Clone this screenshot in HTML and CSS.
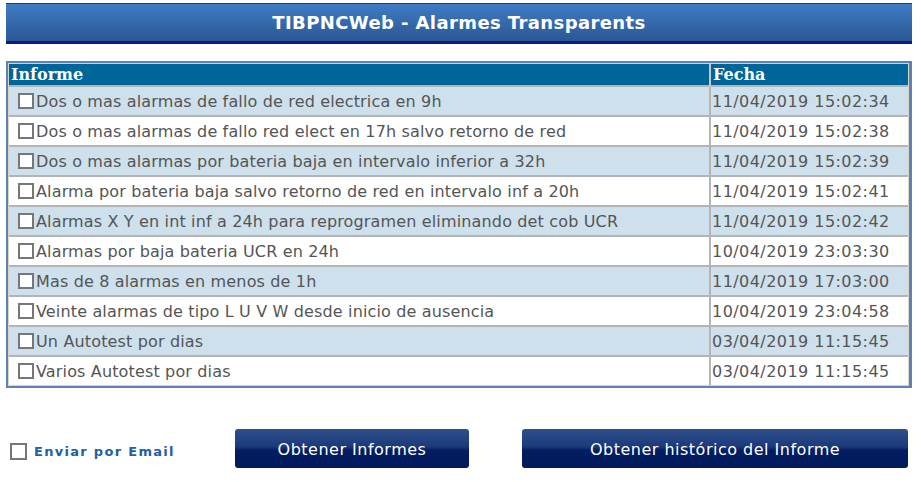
FILE: index.html
```html
<!DOCTYPE html>
<html lang="es">
<head>
    <meta charset="UTF-8">
    <meta name="viewport" content="width=device-width, initial-scale=1.0">
    <title>TIBPNCWeb - Alarmes Transparents</title>
    <link rel="stylesheet" href="styles.css">
</head>
<body>
    <div class="title-bar">TIBPNCWeb - Alarmes Transparents</div>

    <div class="report-wrap">
        <table class="report-table">
            <thead>
                <tr>
                    <th class="col-informe">Informe</th>
                    <th class="col-fecha">Fecha</th>
                </tr>
            </thead>
            <tbody>
                <tr class="row-alt">
                    <td><label><input type="checkbox">Dos o mas alarmas de fallo de red electrica en 9h</label></td>
                    <td>11/04/2019 15:02:34</td>
                </tr>
                <tr>
                    <td><label><input type="checkbox">Dos o mas alarmas de fallo red elect en 17h salvo retorno de red</label></td>
                    <td>11/04/2019 15:02:38</td>
                </tr>
                <tr class="row-alt">
                    <td><label><input type="checkbox">Dos o mas alarmas por bateria baja en intervalo inferior a 32h</label></td>
                    <td>11/04/2019 15:02:39</td>
                </tr>
                <tr>
                    <td><label><input type="checkbox">Alarma por bateria baja salvo retorno de red en intervalo inf a 20h</label></td>
                    <td>11/04/2019 15:02:41</td>
                </tr>
                <tr class="row-alt">
                    <td><label><input type="checkbox">Alarmas X Y en int inf a 24h para reprogramen eliminando det cob UCR</label></td>
                    <td>11/04/2019 15:02:42</td>
                </tr>
                <tr>
                    <td><label><input type="checkbox">Alarmas por baja bateria UCR en 24h</label></td>
                    <td>10/04/2019 23:03:30</td>
                </tr>
                <tr class="row-alt">
                    <td><label><input type="checkbox">Mas de 8 alarmas en menos de 1h</label></td>
                    <td>11/04/2019 17:03:00</td>
                </tr>
                <tr>
                    <td><label><input type="checkbox">Veinte alarmas de tipo L U V W desde inicio de ausencia</label></td>
                    <td>10/04/2019 23:04:58</td>
                </tr>
                <tr class="row-alt">
                    <td><label><input type="checkbox">Un Autotest por dias</label></td>
                    <td>03/04/2019 11:15:45</td>
                </tr>
                <tr>
                    <td><label><input type="checkbox">Varios Autotest por dias</label></td>
                    <td>03/04/2019 11:15:45</td>
                </tr>
            </tbody>
        </table>
    </div>

    <div class="actions">
        <label class="email-option"><input type="checkbox">Enviar por Email</label>
        <button class="btn btn-informes">Obtener Informes</button>
        <button class="btn btn-historico">Obtener histórico del Informe</button>
    </div>
</body>
</html>
```

FILE: styles.css
```css
body {
    font-family: "DejaVu Sans", Verdana, sans-serif;
    margin: 3px 9px 0 6px;
    background: #fff;
}

.title-bar {
    height: 37px;
    line-height: 37px;
    border-top: 1px solid #1a3f8a;
    border-bottom: 3px solid #0a1a88;
    background: linear-gradient(#3f7cc4, #2b5794);
    color: #fff;
    font-weight: bold;
    font-size: 18px;
    letter-spacing: 0.4px;
    text-align: center;
}

.report-wrap {
    margin-top: 17px;
    border: 2px solid #5f82b4;
    border-right-width: 3px;
    background: #d8d4cc;
    padding: 1px;
}

.report-table {
    width: 100%;
    border-collapse: collapse;
    background: #fff;
}

.report-table th {
    background: #006699;
    color: #fff;
    font-family: "DejaVu Serif", "Times New Roman", serif;
    font-weight: bold;
    font-size: 16px;
    text-align: left;
    height: 21px;
    padding: 0 2px;
    line-height: 21px;
    border-left: 2px solid #c8c8c8;
}

.report-table th:first-child {
    border-left: none;
}

.col-fecha {
    width: 193px;
}

.report-table td {
    height: 28px;
    padding: 0 2px 0 9px;
    color: #555;
    font-size: 16px;
    letter-spacing: 0.15px;
    border-top: 2px solid #b4b4b4;
    border-left: 2px solid #b4b4b4;
    white-space: nowrap;
}

.report-table td:first-child {
    border-left: none;
}

.report-table td:last-child {
    padding-left: 1px;
    letter-spacing: 0.45px;
}

.row-alt td {
    background: #cde0ec;
}

.report-table label {
    display: flex;
    align-items: center;
}

input[type="checkbox"] {
    appearance: none;
    width: 16px;
    height: 16px;
    margin: 0 2px 0 0;
    border: 2px solid #777;
    background: #fff;
    box-sizing: border-box;
}

.actions {
    display: flex;
    align-items: center;
    margin-top: 41px;
}

.email-option {
    display: flex;
    align-items: center;
    margin-left: 4px;
    margin-top: 6px;
    color: #22609f;
    font-weight: bold;
    font-size: 13px;
    letter-spacing: 1.3px;
    width: 225px;
}

.email-option input[type="checkbox"] {
    width: 17px;
    height: 17px;
    margin-right: 7px;
}

.btn {
    height: 39px;
    border: none;
    border-radius: 3px;
    background: linear-gradient(#2f4f8c 0%, #1c3a7a 45%, #021d60 55%, #011a5c 100%);
    color: #fff;
    font-family: "DejaVu Sans", Verdana, sans-serif;
    font-size: 16px;
    letter-spacing: 0.5px;
    padding-top: 2px;
    cursor: pointer;
}

.btn-informes {
    width: 234px;
}

.btn-historico {
    width: 386px;
    margin-left: 53px;
}
```
